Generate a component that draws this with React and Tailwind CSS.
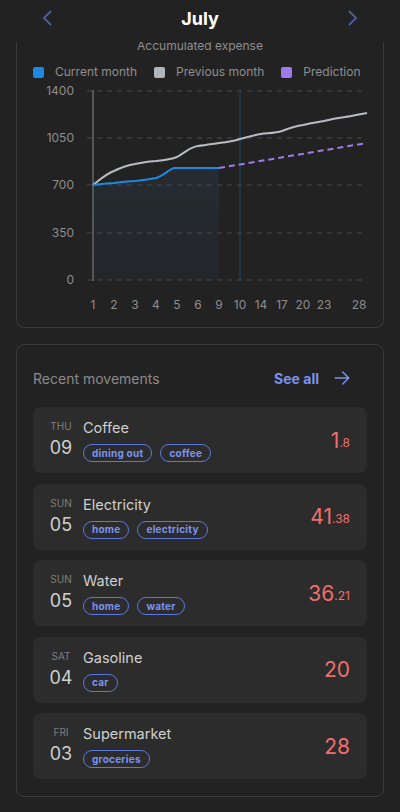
import React from 'react';

const movements = [
    { day: 'THU', date: '09', title: 'Coffee', tags: ['dining out', 'coffee'], whole: '1', cents: '.8' },
    { day: 'SUN', date: '05', title: 'Electricity', tags: ['home', 'electricity'], whole: '41', cents: '.38' },
    { day: 'SUN', date: '05', title: 'Water', tags: ['home', 'water'], whole: '36', cents: '.21' },
    { day: 'SAT', date: '04', title: 'Gasoline', tags: ['car'], whole: '20', cents: '' },
    { day: 'FRI', date: '03', title: 'Supermarket', tags: ['groceries'], whole: '28', cents: '' },
];

const yTicks = [
    { label: '1400', y: 91 },
    { label: '1050', y: 138 },
    { label: '700', y: 185 },
    { label: '350', y: 233 },
    { label: '0', y: 280 },
];

const xTicks = [
    ['1', 93], ['2', 114], ['3', 135], ['4', 156], ['5', 177], ['6', 198], ['9', 219],
    ['10', 240], ['14', 261], ['17', 282], ['20', 303], ['23', 324], ['28', 359],
];

const Chart = () => {
    const blue = 'M93 185 C103 184 110 183 114 183 C124 182 130 181 135 181 C145 180 150 179 156 178 C163 176 168 170 174 168 L219 168';
    const gray = 'M93 185 C102 178 106 174 114 171 C122 167 128 165 135 164 C145 162 150 161 156 161 C166 160 172 159 177 157 C186 152 190 147 198 146 C206 145 212 144 219 143 C228 142 234 141 240 139 C248 137 254 135 261 134 C270 133 276 133 282 131 C290 128 296 126 303 125 C311 123 318 122 324 121 C332 119 338 118 345 117 C353 116 360 114 367 113';

    return (
        <svg width="366" height="232" viewBox="0 0 366 232" className="block">
            <defs>
                <linearGradient id="areaFill" x1="0" y1="0" x2="0" y2="1">
                    <stop offset="0%" stopColor="#262c32" />
                    <stop offset="100%" stopColor="#23262a" />
                </linearGradient>
            </defs>
            <g transform="translate(-17,-84)" fontFamily="Inter, sans-serif" fontSize="12">
                <path d={`${blue} L219 280 L93 280 Z`} fill="url(#areaFill)" />
                {yTicks.map(t => (
                    <g key={t.label}>
                        <line x1="87" x2="367" y1={t.y} y2={t.y} stroke="#4a4a4a" strokeDasharray="5 5" />
                        <text x="74" y={t.y + 4} textAnchor="end" fill="#8e8e8e">{t.label}</text>
                    </g>
                ))}
                <line x1="93" x2="93" y1="90" y2="281" stroke="#555" strokeWidth="2" />
                <line x1="240" x2="240" y1="90" y2="281" stroke="#1c4666" strokeWidth="1" />
                <path d={gray} fill="none" stroke="#b8bcc2" strokeWidth="2" />
                <path d={blue} fill="none" stroke="#1e88e5" strokeWidth="2" />
                <line x1="219" y1="168" x2="367" y2="143" stroke="#9f7aea" strokeWidth="2" strokeDasharray="6 4" />
                {xTicks.map(([l, x]) => (
                    <text key={l} x={x} y="309" textAnchor="middle" fill="#8e8e8e">{l}</text>
                ))}
            </g>
        </svg>
    );
};

const LegendItem = ({ color, label }) => (
    <div className="flex items-center gap-[11px]">
        <span className={`w-[11px] h-[11px] rounded-[2px] ${color}`}></span>
        <span className="text-[12px] text-[#8e8e8e]">{label}</span>
    </div>
);

const App = () => {
    return (
        <div className="w-[400px] min-h-[812px] bg-[#222222] font-['Inter',sans-serif] pb-4">
            {/* header */}
            <div className="h-[36px] flex items-center justify-between pl-[40px] pr-[40px]">
                <svg className="w-[16px] h-[20px]" fill="none" stroke="#4b5c9c" viewBox="0 0 16 20">
                    <path strokeWidth="2" d="M11 3l-7 7 7 7" />
                </svg>
                <h1 className="text-[18px] font-bold text-white">July</h1>
                <svg className="w-[16px] h-[20px]" fill="none" stroke="#4b5c9c" viewBox="0 0 16 20">
                    <path strokeWidth="2" d="M5 3l7 7-7 7" />
                </svg>
            </div>
            <div className="h-[6px]"></div>

            {/* chart card */}
            <div className="mx-4 border-x border-b border-[#3a3a3a] rounded-b-lg">
                <div className="h-[12px] overflow-hidden">
                    <p className="-mt-[4px] leading-4 text-[12px] text-center text-[#8e8e8e]">Accumulated expense</p>
                </div>
                <div className="flex items-center gap-[17px] pl-4 mt-[10px] h-4">
                    <LegendItem color="bg-[#1e88e5]" label="Current month" />
                    <LegendItem color="bg-[#b0b5bb]" label="Previous month" />
                    <LegendItem color="bg-[#9f7aea]" label="Prediction" />
                </div>
                <div className="mt-[4px] pb-[11px]">
                    <Chart />
                </div>
            </div>

            {/* recent movements */}
            <div className="mx-4 mt-[16px] border border-[#3a3a3a] rounded-lg px-4 pt-[23px] pb-[17px]">
                <div className="flex items-center justify-between h-5 mb-[19px]">
                    <span className="text-[14px] text-[#8a8a8a]">Recent movements</span>
                    <div className="flex items-center gap-[14px] pr-[16px]">
                        <span className="text-[14px] font-bold text-[#7b93ee]">See all</span>
                        <svg className="w-[18px] h-[18px]" fill="none" stroke="#7b93ee" viewBox="0 0 24 24">
                            <path strokeWidth="2" strokeLinecap="round" strokeLinejoin="round" d="M3 12h18M13 4l8 8-8 8" />
                        </svg>
                    </div>
                </div>

                <div className="flex flex-col gap-[10.5px]">
                    {movements.map((m, i) => (
                        <div key={i} className="h-[66px] rounded-lg bg-[#2c2c2c] flex items-center pl-4 pr-[17px]">
                            <div className="w-[24px] flex flex-col items-center">
                                <span className="text-[10px] leading-3 text-[#7e7e7e]">{m.day}</span>
                                <span className="text-[18px] leading-6 mt-[4px] text-[#cfcfcf]">{m.date}</span>
                            </div>
                            <div className="ml-[10px] flex-1 flex flex-col">
                                <span className="text-[14.5px] leading-5 text-[#cfcfcf]">{m.title}</span>
                                <div className="flex gap-2 mt-[6px]">
                                    {m.tags.map(t => (
                                        <span key={t} className="h-[18px] px-[8px] flex items-center rounded-full border border-[#5b78dd] text-[10px] font-bold tracking-wide text-[#7b93ee]">
                                            {t}
                                        </span>
                                    ))}
                                </div>
                            </div>
                            <div className="flex items-end text-[#ef6f6f]">
                                <span className="text-[21px] leading-[21px]">{m.whole}</span>
                                {m.cents && <span className="text-[12px] leading-[12px] mb-[2px]">{m.cents}</span>}
                            </div>
                        </div>
                    ))}
                </div>
            </div>
        </div>
    );
};

export default App;
